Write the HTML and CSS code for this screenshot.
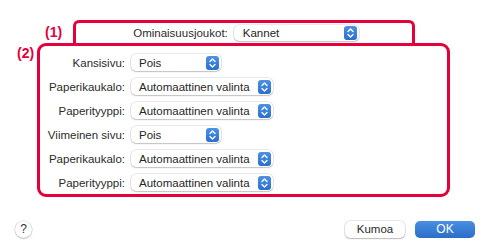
FILE: index.html
```html
<!DOCTYPE html>
<html>
<head>
<meta charset="utf-8">
<link rel="stylesheet" href="styles.css">
</head>
<body>
<div class="dialog">
  <div class="sec sec1">
    <div class="num num1">(1)</div>
    <div class="box box1">
      <div class="toprow">
        <span class="lbl">Ominaisuusjoukot:</span>
        <div class="popup w-top"><span>Kannet</span><i class="arr"><svg viewBox="0 0 13 14" width="13" height="14"><path d="M4 5.5 L6.5 3 L9 5.5 M4 8.5 L6.5 11 L9 8.5" fill="none" stroke="#fff" stroke-width="1.4" stroke-linecap="round" stroke-linejoin="round"/></svg></i></div>
      </div>
    </div>
  </div>
  <div class="sec sec2">
    <div class="num num2">(2)</div>
    <div class="box box2">
      <div class="grid">
        <span class="lbl">Kansisivu:</span>
        <div class="popup w-short"><span>Pois</span><i class="arr"><svg viewBox="0 0 13 14" width="13" height="14"><path d="M4 5.5 L6.5 3 L9 5.5 M4 8.5 L6.5 11 L9 8.5" fill="none" stroke="#fff" stroke-width="1.4" stroke-linecap="round" stroke-linejoin="round"/></svg></i></div>
        <span class="lbl">Paperikaukalo:</span>
        <div class="popup w-long"><span>Automaattinen valinta</span><i class="arr"><svg viewBox="0 0 13 14" width="13" height="14"><path d="M4 5.5 L6.5 3 L9 5.5 M4 8.5 L6.5 11 L9 8.5" fill="none" stroke="#fff" stroke-width="1.4" stroke-linecap="round" stroke-linejoin="round"/></svg></i></div>
        <span class="lbl">Paperityyppi:</span>
        <div class="popup w-long"><span>Automaattinen valinta</span><i class="arr"><svg viewBox="0 0 13 14" width="13" height="14"><path d="M4 5.5 L6.5 3 L9 5.5 M4 8.5 L6.5 11 L9 8.5" fill="none" stroke="#fff" stroke-width="1.4" stroke-linecap="round" stroke-linejoin="round"/></svg></i></div>
        <span class="lbl">Viimeinen sivu:</span>
        <div class="popup w-short"><span>Pois</span><i class="arr"><svg viewBox="0 0 13 14" width="13" height="14"><path d="M4 5.5 L6.5 3 L9 5.5 M4 8.5 L6.5 11 L9 8.5" fill="none" stroke="#fff" stroke-width="1.4" stroke-linecap="round" stroke-linejoin="round"/></svg></i></div>
        <span class="lbl">Paperikaukalo:</span>
        <div class="popup w-long"><span>Automaattinen valinta</span><i class="arr"><svg viewBox="0 0 13 14" width="13" height="14"><path d="M4 5.5 L6.5 3 L9 5.5 M4 8.5 L6.5 11 L9 8.5" fill="none" stroke="#fff" stroke-width="1.4" stroke-linecap="round" stroke-linejoin="round"/></svg></i></div>
        <span class="lbl">Paperityyppi:</span>
        <div class="popup w-long"><span>Automaattinen valinta</span><i class="arr"><svg viewBox="0 0 13 14" width="13" height="14"><path d="M4 5.5 L6.5 3 L9 5.5 M4 8.5 L6.5 11 L9 8.5" fill="none" stroke="#fff" stroke-width="1.4" stroke-linecap="round" stroke-linejoin="round"/></svg></i></div>
      </div>
    </div>
  </div>
  <div class="footer">
    <div class="help">?</div>
    <div class="btns">
      <div class="btn cancel">Kumoa</div>
      <div class="btn ok">OK</div>
    </div>
  </div>
</div>
</body>
</html>
```

FILE: styles.css
```css
* { box-sizing: border-box; }
html, body { margin: 0; padding: 0; background: #fff; }
body {
  width: 487px;
  height: 250px;
  overflow: hidden;
  font-family: "Liberation Sans", Arial, sans-serif;
  font-size: 11.5px;
  color: #262626;
}
.dialog { padding-top: 20px; }
.sec { display: flex; align-items: flex-start; }
.sec1 { padding-left: 45px; height: 23px; }
.sec2 { padding-left: 17px; }
.num {
  font-weight: bold;
  font-size: 14px;
  line-height: 14px;
  color: #e4003a;
}
.num1 { width: 28px; margin-top: 5px; }
.num2 { width: 20px; margin-top: 3px; }
.box { border: 3px solid #e4003a; }
.box1 {
  width: 342px;
  height: 23px;
  border-bottom: none;
  border-radius: 6px 6px 0 0;
}
.box2 {
  width: 413px;
  height: 154px;
  border-radius: 9px;
}
.toprow {
  display: flex;
  align-items: center;
  justify-content: center;
  gap: 6px;
  padding-top: 2px;
  padding-left: 4px;
}
.lbl { white-space: nowrap; color: #2b2b2b; }
.grid {
  display: grid;
  grid-template-columns: 85px auto;
  column-gap: 6px;
  row-gap: 7px;
  padding-top: 8px;
  align-items: center;
  justify-items: start;
}
.grid .lbl { justify-self: end; }
.popup {
  height: 17px;
  display: flex;
  align-items: center;
  justify-content: space-between;
  padding: 0 2px 0 8px;
  background: #fff;
  border-radius: 5px;
  box-shadow: 0 0 0 0.5px rgba(0,0,0,0.16), 0 1px 1.5px rgba(0,0,0,0.18);
  white-space: nowrap;
}
.w-top { width: 125px; height: 16px; padding-left: 9px; }
.w-short { width: 90px; }
.w-long { width: 142px; }
.arr {
  display: block;
  width: 13px;
  height: 14px;
  border-radius: 3px;
  background: linear-gradient(#4d92e6, #2a6fcf);
}
.arr svg { display: block; }
.footer {
  margin-top: 24px;
  display: flex;
  align-items: center;
  justify-content: space-between;
  padding: 0 12px 0 15px;
}
.help {
  width: 17px;
  height: 17px;
  border-radius: 50%;
  background: #fff;
  box-shadow: 0 0 0 0.5px rgba(0,0,0,0.18), 0 1px 1.5px rgba(0,0,0,0.2);
  text-align: center;
  line-height: 17px;
  font-size: 12px;
  color: #333;
}
.btns { display: flex; gap: 10px; }
.btn {
  width: 60px;
  height: 17px;
  border-radius: 5px;
  text-align: center;
  line-height: 17px;
  font-size: 11.5px;
}
.cancel {
  background: #fff;
  color: #2b2b2b;
  box-shadow: 0 0 0 0.5px rgba(0,0,0,0.18), 0 1px 1.5px rgba(0,0,0,0.2);
}
.ok {
  background: linear-gradient(#4a8fe0, #2a6ec9);
  color: #fff;
  font-size: 12px;
}
```
